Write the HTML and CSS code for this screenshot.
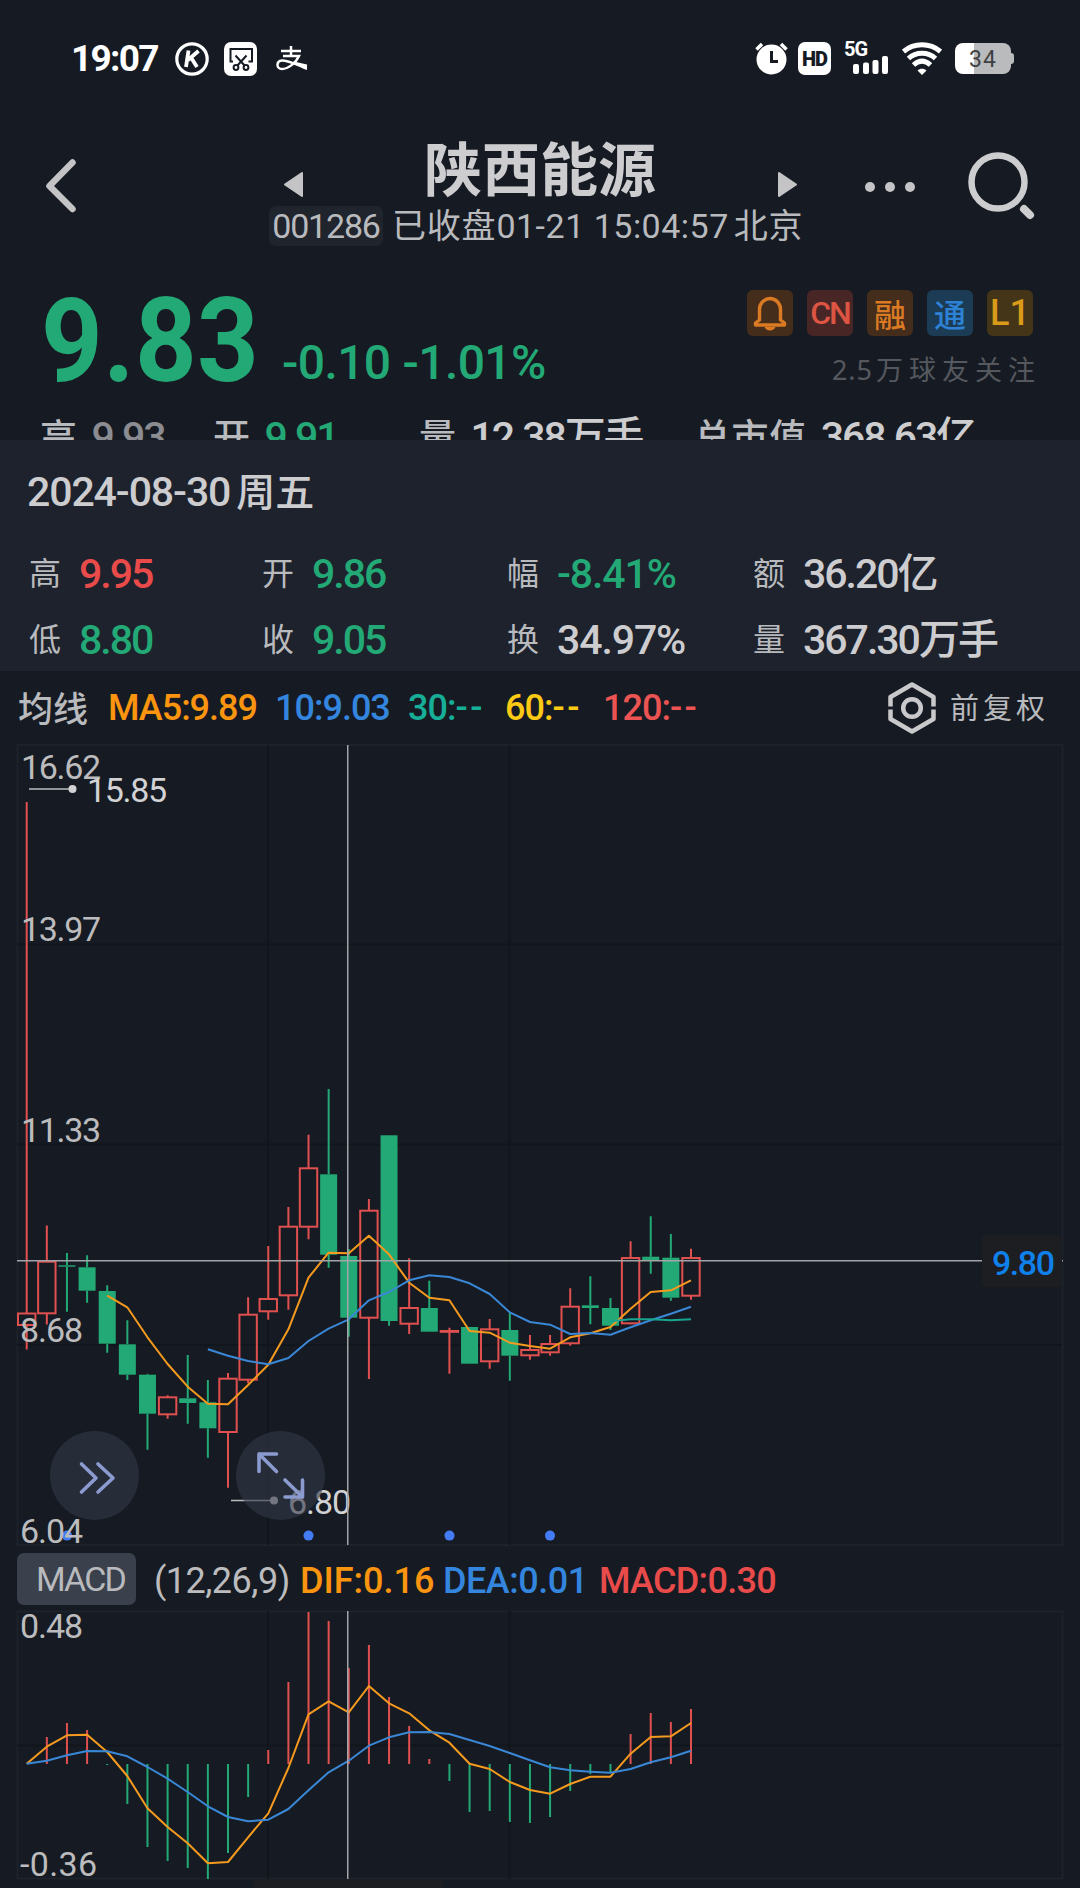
FILE: index.html
```html
<!DOCTYPE html>
<html lang="zh-CN">
<head>
    <meta charset="UTF-8">
    <meta name="viewport" content="width=device-width, initial-scale=1.0">
    <title>陕西能源 001286</title>
    <link rel="stylesheet" href="styles.css">
</head>
<body>
    <div class="status-bar">
        <span class="time">19:07</span>
        <svg class="icon-k" width="34" height="34" viewBox="0 0 34 34">
            <circle cx="17" cy="17" r="15.2" fill="none" stroke="#fff" stroke-width="3.2"/>
            <path d="M13.5 8.5 L11 25 M23.5 9 L13 18 M16 15.5 L22 25" fill="none" stroke="#fff" stroke-width="3.8"/>
        </svg>
        <svg class="icon-cut" width="33" height="34" viewBox="0 0 33 34">
            <rect width="33" height="34" rx="7" fill="#fff"/>
            <g fill="none" stroke="#161b23" stroke-width="2">
                <path d="M9 19.5 H6.5 V7 H28 V19.5 H24.5"/>
                <path d="M11.5 13.5 L21 24 M22.5 13.5 L13 24"/>
                <circle cx="12" cy="25.5" r="2.4"/>
                <circle cx="22" cy="25.5" r="2.4"/>
            </g>
        </svg>
        <svg class="icon-pay" width="32" height="25" viewBox="0 0 32 25">
            <path d="M5 5 H25 M15 0 V10 M7 10 H23 C20 17 12 23 6 23 C0 23 0 15 6 14.5 C13 14 20 20 31 21" fill="none" stroke="#fff" stroke-width="2.5"/>
            <path d="M20 16 L31 18.5 V24 C27 23 23 20 18 18 Z" fill="#fff"/>
        </svg>
        <div class="status-right">
            <svg width="33" height="33" viewBox="0 0 33 33">
                <circle cx="16.5" cy="17.5" r="15" fill="#fff"/>
                <path d="M1.5 7.5 L7 2 M31.5 7.5 L26 2" stroke="#fff" stroke-width="3.5"/>
                <path d="M16.5 9 V19.5 H23" fill="none" stroke="#161b23" stroke-width="3"/>
            </svg>
            <span class="hd">HD</span>
            <div class="signal">
                <span>5G</span>
                <svg width="36" height="18" viewBox="0 0 36 18">
                    <g fill="#fff">
                        <rect x="0" y="8" width="6" height="10" rx="2"/>
                        <rect x="10" y="6.5" width="6" height="11.5" rx="2"/>
                        <rect x="19.5" y="4" width="6" height="14" rx="2"/>
                        <rect x="29" y="0" width="6" height="18" rx="2"/>
                    </g>
                </svg>
            </div>
            <svg class="wifi" width="40" height="33" viewBox="0 0 40 33">
                <g fill="none" stroke="#fff" stroke-width="5">
                    <path d="M1.5 9.5 C12 0.500 28 0.500 38.5 9.5"/>
                    <path d="M6.500 16.500 C14 9.500 26 9.500 33.500 16.500"/>
                    <path d="M11.500 23 C17 18 23 18 28.500 23"/>
                </g>
                <path d="M15.5 28.500 C18 26 22 26 24.5 28.500 L20 33 Z" fill="#fff"/>
            </svg>
            <div class="battery"><span>34</span></div>
        </div>
    </div>

    <div class="nav">
        <svg class="back" width="30" height="54" viewBox="0 0 30 54">
            <path d="M26.5 3.5 L3.5 27 L26.5 50" fill="none" stroke="#c4c4c6" stroke-width="6.5" stroke-linecap="round" stroke-linejoin="round"/>
        </svg>
        <div class="stock">
            <div class="stock-title">
                <svg width="19" height="25" viewBox="0 0 19 25"><path d="M1 12.5 L18 1 V24 Z" fill="#c4c4c6" stroke="#c4c4c6" stroke-linejoin="round" stroke-width="2"/></svg>
                <h1>陕西能源</h1>
                <svg width="19" height="25" viewBox="0 0 19 25"><path d="M18 12.5 L1 1 V24 Z" fill="#c4c4c6" stroke="#c4c4c6" stroke-linejoin="round" stroke-width="2"/></svg>
            </div>
            <div class="stock-sub">
                <span class="code">001286</span>
                <span class="state">已收盘<em>01-21 15:04:57</em>北京</span>
            </div>
        </div>
        <svg class="more" width="50" height="12" viewBox="0 0 50 12">
            <g fill="#c4c4c6">
                <circle cx="5" cy="6" r="5"/><circle cx="25" cy="6" r="5"/><circle cx="45" cy="6" r="5"/>
            </g>
        </svg>
        <svg class="search" width="68" height="68" viewBox="0 0 68 68">
            <circle cx="30" cy="30" r="26.5" fill="none" stroke="#cdcdcf" stroke-width="6.5"/>
            <path d="M56 57 L62 63" stroke="#cdcdcf" stroke-width="8" stroke-linecap="round"/>
        </svg>
    </div>

    <div class="quote">
        <div class="quote-top">
            <div class="price"><b>9.83</b></div>
            <div class="change"><span>-0.10</span><span>-1.01%</span></div>
            <div class="quote-side">
                <div class="tags">
                    <span class="tag tag-bell">
                        <svg width="36" height="36" viewBox="0 0 36 36">
                            <path d="M7.5 25 V14.5 A10.5 11 0 0 1 28.5 14.5 V25 L32.5 28 V30 H3.5 V28 Z" fill="none" stroke="#da7b23" stroke-width="3.4" stroke-linejoin="round"/>
                            <path d="M12.5 32 H23.5 C22 36.5 14 36.5 12.5 32 Z" fill="#da7b23"/>
                        </svg>
                    </span>
                    <span class="tag tag-cn">CN</span>
                    <span class="tag tag-rong">融</span>
                    <span class="tag tag-tong">通</span>
                    <span class="tag tag-l1">L1</span>
                </div>
                <div class="followers"><span>2.5</span>万球友关注</div>
            </div>
        </div>
        <div class="summary">
            <div><label>高</label><span class="flat">9.93</span></div>
            <div><label>开</label><span class="down">9.91</span></div>
            <div><label>量</label><span>12.38万手</span></div>
            <div><label>总市值</label><span>368.63亿</span></div>
        </div>
    </div>

    <div class="day-panel">
        <div class="day">2024-08-30<span>周五</span></div>
        <div class="day-grid">
            <div><label>高</label><span class="up">9.95</span></div>
            <div><label>开</label><span class="down">9.86</span></div>
            <div><label>幅</label><span class="down percent">-8.41%</span></div>
            <div><label>额</label><span>36.20亿</span></div>
            <div><label>低</label><span class="down">8.80</span></div>
            <div><label>收</label><span class="down">9.05</span></div>
            <div><label>换</label><span class="percent">34.97%</span></div>
            <div><label>量</label><span>367.30万手</span></div>
        </div>
    </div>

    <div class="ma-bar">
        <span class="ma-name">均线</span>
        <span class="ma5">MA5:9.89</span>
        <span class="ma10">10:9.03</span>
        <span class="ma30">30:<i>--</i></span>
        <span class="ma60">60:<i>--</i></span>
        <span class="ma120">120:<i>--</i></span>
        <div class="adjust">
            <svg width="48" height="52" viewBox="0 0 48 52">
                <g fill="none" stroke="#c9c9cb" stroke-width="4.5" stroke-linejoin="round">
                    <path d="M2.5 24.5 V15 L24 2.5 L45.5 15 V24.5"/>
                    <path d="M2.5 27.5 V37 L24 49.5 L45.5 37 V27.5"/>
                    <circle cx="24" cy="26" r="8.8"/>
                </g>
            </svg>
            <span>前复权</span>
        </div>
    </div>

    <svg class="chart" width="1080" height="802" viewBox="0 744 1080 802">
        <rect class="frame" x="17.5" y="745" width="1045" height="800"/>
        <path class="grid" d="M17 944.5 H1062 M17 1144.5 H1062 M17 1345 H1062 M268 745 V1545 M509.500 745 V1545"/>
        <g id="candles"></g>
        <g class="dots">
            <circle cx="67" cy="1535.6" r="5"/>
            <circle cx="308.5" cy="1535.6" r="5"/>
            <circle cx="449.5" cy="1535.6" r="5"/>
            <circle cx="550" cy="1535.6" r="5"/>
        </g>
        <g class="axis">
            <text x="21" y="779" textLength="80">16.62</text>
            <text x="21" y="941" textLength="80">13.97</text>
            <text x="21" y="1141.5" textLength="80">11.33</text>
            <text x="20" y="1342" textLength="63">8.68</text>
            <text x="20" y="1543" textLength="63">6.04</text>
        </g>
        <g class="mark">
            <path d="M29 789 H72 M231 1500.5 H274"/>
            <circle cx="72.5" cy="789" r="4"/>
            <circle cx="274" cy="1500.5" r="4"/>
            <text x="87" y="802" textLength="80">15.85</text>
            <text x="288" y="1514" textLength="63">6.80</text>
        </g>
        <g id="maLines"></g>
        <path class="cross" d="M347.75 745 V1545 M17 1260.7 H1063"/>
        <g class="price-tag">
            <rect x="982" y="1235" width="80" height="52" rx="4"/>
            <text x="992" y="1274.500" textLength="63">9.80</text>
        </g>
        <g class="round-btn">
            <circle cx="94.5" cy="1475.5" r="44.5"/>
            <circle cx="280.5" cy="1475.5" r="44.5"/>
            <path d="M81.5 1464 L96 1478 L81.5 1492 M98 1464 L113 1478 L98 1492"/>
            <path d="M276.5 1471.5 L259 1454 M259 1471.5 V1454 H276.5 M285 1480 L302.5 1497 M302.5 1480 V1497 H285"/>
        </g>
    </svg>

    <div class="macd-bar">
        <button>MACD</button>
        <span class="params">(12,26,9)</span>
        <span class="dif">DIF:0.16</span>
        <span class="dea">DEA:0.01</span>
        <span class="macd">MACD:0.30</span>
    </div>

    <svg class="chart" width="1080" height="278" viewBox="0 1610 1080 278">
        <rect class="frame" x="17.5" y="1611.5" width="1045" height="267"/>
        <path class="grid" d="M17 1745.5 H1062 M268 1611 V1879 M509.5 1611 V1879"/>
        <g id="macdBars"></g>
        <g class="axis">
            <text x="20" y="1638" textLength="63">0.48</text>
            <text x="20" y="1876" textLength="77">-0.36</text>
        </g>
        <g id="macdLines"></g>
        <path class="cross" d="M347.75 1611 V1879"/>
        <rect class="date-tag" x="254" y="1879" width="188" height="20" rx="4"/>
    </svg>

    <script src="chart.js"></script>
</body>
</html>
```

FILE: styles.css
```css
:root {
    --bg: #161b23;
    --panel: #1d222d;
    --text: #cdcdcf;
    --muted: #b9babd;
    --up: #e94b4a;
    --down: #23a975;
    --orange: #fb940f;
    --blue: #3485dd;
}

* {
    box-sizing: border-box;
}

body {
    margin: 0;
    width: 1080px;
    height: 1888px;
    overflow: hidden;
    background: var(--bg);
    color: var(--text);
    font-family: Roboto, "Noto Sans CJK SC", sans-serif;
    font-weight: 500;
}

svg {
    display: block;
    flex-shrink: 0;
}

i,
em {
    font-style: normal;
}

.up {
    color: var(--up);
}

.down {
    color: var(--down);
}

.flat {
    color: #8b8c91;
}

/* 状态栏 */
.status-bar {
    display: flex;
    align-items: center;
    height: 112px;
    padding: 5px 66px 0 71px;
    color: #fff;
}

.time {
    width: 104px;
    font-size: 37px;
    font-weight: 700;
    letter-spacing: -1.7px;
}

.icon-cut {
    margin-left: 15px;
}

.icon-pay {
    margin-left: 19px;
}

.status-right {
    display: flex;
    align-items: center;
    margin-left: auto;
}

.hd {
    width: 33px;
    height: 33px;
    margin-left: 10px;
    border-radius: 7px;
    background: #fff;
    color: var(--bg);
    font-size: 20px;
    font-weight: 900;
    line-height: 34px;
    text-align: center;
    letter-spacing: -1px;
}

.signal {
    width: 45px;
    height: 32px;
    margin-left: 13px;
}

.signal span {
    display: block;
    height: 13px;
    font-size: 20px;
    font-weight: 700;
    line-height: 13px;
    letter-spacing: -1px;
}

.signal svg {
    margin-left: 9px;
}

.wifi {
    margin-left: 13px;
}

.battery {
    position: relative;
    width: 56px;
    height: 31px;
    margin: 0 3px 0 13px;
    border-radius: 8px;
    background: linear-gradient(90deg, #fff 19px, #b9bbbd 19px);
    color: #3f4145;
    font-size: 23px;
    font-weight: 400;
    line-height: 33px;
    text-align: center;
    letter-spacing: 1px;
}

.battery::after {
    content: "";
    position: absolute;
    top: 10px;
    right: -3px;
    width: 4px;
    height: 11px;
    border-radius: 0 3px 3px 0;
    background: #b9bbbd;
}

/* 导航 */
.nav {
    display: flex;
    align-items: flex-start;
    height: 158px;
    padding-left: 46px;
}

.back {
    margin-top: 47px;
}

.stock {
    width: 541px;
    margin-left: 193px;
    padding-top: 29px;
}

.stock-title {
    display: flex;
    align-items: center;
    justify-content: space-between;
    height: 65px;
    padding: 0 13px 0 15px;
}

.stock-title svg {
    margin-top: 22px;
}

.stock-title h1 {
    margin: -4px 0 0 -1px;
    font-size: 58px;
    font-weight: 700;
    line-height: 65px;
}

.stock-sub {
    display: flex;
    align-items: center;
    color: var(--muted);
    font-size: 34px;
    line-height: 40px;
    white-space: nowrap;
}

.code {
    width: 114px;
    border-radius: 7px;
    background: #20242d;
    text-align: center;
    letter-spacing: -1.2px;
    font-weight: 400;
}

.state {
    margin-left: 9px;
    font-weight: 400;
    letter-spacing: 0.8px;
}

.state em {
    margin-right: 5px;
    letter-spacing: 0.5px;
}

.more {
    margin: 69px 0 0 55px;
}

.search {
    margin: 40px 0 0 53px;
}

/* 报价 */
.quote {
    height: 170px;
    overflow: hidden;
}

.quote-top {
    display: flex;
    height: 145px;
    padding: 0 47px 0 41px;
    color: var(--down);
}

.price {
    width: 241px;
    font-size: 117px;
    line-height: 142px;
}

.price b {
    display: inline-block;
    transform: scaleX(0.92);
    transform-origin: left;
    letter-spacing: 0.5px;
}

.change {
    display: flex;
    gap: 12px;
    padding-top: 64px;
    font-size: 48px;
    line-height: 58px;
    letter-spacing: -0.6px;
}

.quote-side {
    margin-left: auto;
    padding-top: 20px;
}

.tags {
    display: flex;
    gap: 14px;
    justify-content: flex-end;
}

.tag {
    display: flex;
    align-items: center;
    justify-content: center;
    width: 46px;
    height: 46px;
    border-radius: 6px;
    font-size: 32px;
}

.tag-bell,
.tag-rong {
    background: #452d1c;
    color: #da7b23;
}

.tag-cn {
    background: #472625;
    color: #dc5442;
    letter-spacing: -2px;
}

.tag-tong {
    background: #1b3c54;
    color: #2d82d6;
}

.tag-l1 {
    background: #443519;
    color: #d99b18;
    font-size: 36px;
}

.followers {
    margin-top: 15px;
    color: #55585e;
    font-size: 27px;
    font-weight: 400;
    line-height: 38px;
    text-align: right;
    letter-spacing: 6px;
    margin-right: -8px;
}

.followers span {
    font-family: "Noto Sans", sans-serif;
    letter-spacing: 1px;
    margin-right: 3px;
}

.summary {
    display: grid;
    grid-template-columns: 173px 206px 275px 1fr;
    padding-left: 40px;
    font-size: 41px;
    line-height: 44px;
    letter-spacing: -2.1px;
    white-space: nowrap;
}

.summary label {
    display: inline-block;
    margin-right: 14px;
    color: var(--muted);
    font-size: 37px;
    letter-spacing: 0.6px;
}

/* 选中日行情 */
.day-panel {
    height: 231px;
    padding: 28px 0 0 27px;
    background: var(--panel);
}

.day {
    font-size: 41px;
    line-height: 48px;
    letter-spacing: -1.1px;
}

.day span {
    margin-left: 6px;
    font-size: 39px;
    letter-spacing: 0;
}

.day-grid {
    display: grid;
    grid-template-columns: 233px 245px 246px 1fr;
    grid-auto-rows: 66px;
    margin-top: 24px;
    font-size: 41px;
    line-height: 66px;
    letter-spacing: -2px;
    white-space: nowrap;
}

.day-grid > div {
    display: flex;
}

.day-grid label {
    width: 52px;
    padding-left: 2px;
    color: var(--muted);
    font-size: 32px;
    font-weight: 400;
}

.day-grid .percent {
    letter-spacing: -1.1px;
}

/* 均线 */
.ma-bar {
    display: flex;
    align-items: center;
    height: 73px;
    padding: 1px 0 0 18px;
    font-size: 36px;
    letter-spacing: -1px;
}

.ma-bar > span {
    flex-shrink: 0;
    white-space: nowrap;
}

.ma-bar i {
    letter-spacing: 2.5px;
}

.ma-name {
    width: 90px;
    margin-top: -4px;
    color: var(--muted);
    font-size: 35px;
    letter-spacing: 0;
}

.ma5 {
    width: 167px;
    color: var(--orange);
}

.ma10 {
    width: 133px;
    color: var(--blue);
}

.ma30 {
    width: 97px;
    color: #17ae98;
}

.ma60 {
    width: 98px;
    color: #fcc914;
}

.ma120 {
    color: #ec5453;
}

.adjust {
    display: flex;
    align-items: center;
    margin-left: auto;
    padding-right: 31px;
    gap: 14px;
    color: var(--muted);
    font-size: 29px;
    font-weight: 400;
    letter-spacing: 4px;
}

.adjust span {
    margin-top: -4px;
}

/* 图表 */
.chart text {
    font-size: 34px;
    font-weight: 400;
}

.frame {
    fill: none;
    stroke: #1d222b;
    stroke-width: 2;
}

.grid {
    fill: none;
    stroke: #11151c;
    stroke-width: 2;
}

.axis text {
    fill: #bcbcbe;
}

.mark text,
.mark circle {
    fill: #d2d2d4;
}

.mark path {
    stroke: #bcbcbe;
    stroke-width: 1.5;
}

.dots circle {
    fill: #437cf5;
}

.cross {
    fill: none;
    stroke: #a2a4a8;
    stroke-width: 1.5;
}

.price-tag rect,
.date-tag {
    fill: #1d1e21;
}

.price-tag text {
    fill: #1080ea;
    font-weight: 500;
}

.round-btn circle {
    fill: #343948;
    fill-opacity: 0.6;
}

.round-btn path {
    fill: none;
    stroke: #8b9bd0;
    stroke-width: 3.6;
    stroke-linecap: round;
    stroke-linejoin: round;
}

.line {
    fill: none;
    stroke-width: 2;
    stroke-linejoin: round;
}

/* MACD */
.macd-bar {
    display: flex;
    align-items: center;
    height: 64px;
    padding: 5px 0 0 17px;
    font-size: 36px;
    letter-spacing: -0.5px;
    white-space: nowrap;
}

.macd-bar button {
    width: 119px;
    height: 52px;
    margin-top: -3px;
    padding: 0 0 0 8px;
    border: none;
    border-radius: 7px;
    background: #3a414d;
    color: var(--muted);
    font: 400 34px Roboto, sans-serif;
    letter-spacing: -1.8px;
}

.macd-bar span {
    flex-shrink: 0;
}

.params {
    width: 146px;
    margin-left: 18px;
    color: #bcbcbe;
    font-weight: 400;
}

.dif {
    width: 143px;
    color: var(--orange);
    letter-spacing: 0;
}

.dea {
    width: 156px;
    color: var(--blue);
}

.macd {
    color: var(--up);
    letter-spacing: -0.7px;
}
```

FILE: chart.js
```javascript
const START_X = 26.7;
const STEP = 20.13;
const RED = '#e0504f';
const GREEN = '#23a975';

// [颜色, 最高, 实体上沿, 实体下沿, 最低]
const candles = [
    ['r', 802, 1313.5, 1325, 1349.5],
    ['r', 1225.5, 1261.7, 1313.3, 1324.5],
    ['g', 1253, 1265.3, 1266.7, 1311.7],
    ['g', 1255.3, 1267.3, 1290.7, 1302.7],
    ['g', 1285.3, 1291, 1343.7, 1352.7],
    ['g', 1320.3, 1344.3, 1374.7, 1380],
    ['g', 1373.7, 1374.7, 1413.7, 1449.7],
    ['r', 1395.3, 1397.3, 1414.3, 1418.7],
    ['g', 1355, 1398.3, 1403, 1423.7],
    ['g', 1380, 1402.3, 1428.3, 1457.7],
    ['r', 1373, 1378.7, 1432, 1487.7],
    ['r', 1297.3, 1314.7, 1379.7, 1383.3],
    ['r', 1246, 1299, 1311.3, 1319.7],
    ['r', 1207, 1226.7, 1295.3, 1309.7],
    ['r', 1134.7, 1168.3, 1226.7, 1239.3],
    ['g', 1089, 1174.3, 1254.7, 1267.7],
    ['g', 1249, 1256, 1317.7, 1336.7],
    ['r', 1199, 1210.7, 1317.7, 1379],
    ['g', 1135, 1135.3, 1321, 1325.7],
    ['r', 1258.3, 1308, 1323.7, 1334],
    ['g', 1280.7, 1308, 1331.7, 1331.7],
    ['r', 1327.7, 1331, 1331.8, 1373.7],
    ['g', 1327, 1327, 1363.7, 1363.7],
    ['r', 1319, 1329.3, 1361.3, 1368.7],
    ['g', 1312.7, 1330, 1355.7, 1380.7],
    ['r', 1335, 1350, 1355.3, 1359.7],
    ['r', 1335, 1344, 1352.3, 1355.7],
    ['r', 1288.3, 1306.7, 1343.3, 1345.7],
    ['g', 1276.3, 1305.3, 1308, 1324.3],
    ['g', 1298, 1308, 1325.7, 1330],
    ['r', 1241.3, 1258, 1323.3, 1324.3],
    ['g', 1216.3, 1256.7, 1260.7, 1273.7],
    ['g', 1234, 1257.7, 1297.7, 1300.7],
    ['r', 1248.7, 1258, 1295.7, 1299.7]
];

const ma5 = [1295.7, 1307.3, 1337.3, 1364, 1386.7, 1403.7, 1404.3, 1385, 1364.7, 1329.3, 1277.7, 1252.7, 1253.3,
    1235.7, 1254.3, 1282.7, 1297.7, 1300.3, 1331, 1332.7, 1342.7, 1346, 1348.7, 1337.3, 1333.3, 1327, 1308.7, 1292, 1290.3, 1280.3];
const ma10 = [1349.3, 1355.7, 1361, 1364.3, 1358, 1341, 1328.7, 1319.3, 1300.3, 1292, 1280.3, 1275.3, 1277, 1283.3,
    1294, 1312.3, 1322, 1324.7, 1334, 1333, 1334.7, 1327.3, 1320.3, 1313.7, 1306.7];
const ma30 = [1321.3, 1319.3, 1319.3, 1320.3, 1319.3];

const ZERO_Y = 1764;
const macdBars = [0, 27, 41, 34, -1, -40, -83, -97, -104, -115, -89, -33, 14, 82, 152, 143, 96, 119, 67, 38, 5,
    -17, -48, -47, -58, -59, -53, -27, -10, -8, 30, 51, 42, 55];
const dif = [1763.7, 1746.7, 1735.3, 1734.7, 1752, 1776, 1808.3, 1827, 1843.3, 1863.3, 1862, 1837.3, 1813.3, 1768,
    1714.3, 1701.3, 1712.3, 1686, 1703.3, 1713.3, 1730.3, 1742.7, 1763.7, 1769, 1782, 1790, 1793.7, 1784, 1776.7,
    1776.7, 1753.7, 1737, 1736.3, 1723];
const dea = [1763.7, 1760.7, 1755.3, 1751, 1751.3, 1756.3, 1767, 1778.7, 1792, 1806.3, 1817, 1821.3, 1819.7, 1809,
    1790.3, 1772.3, 1760.7, 1745.7, 1737.3, 1732.3, 1732, 1734, 1740, 1746, 1753, 1760.3, 1767.3, 1770.3, 1771.7,
    1772.7, 1769, 1762.3, 1757.3, 1750.7];

function add(parent, tag, attrs) {
    const el = document.createElementNS('http://www.w3.org/2000/svg', tag);
    for (const key in attrs) {
        el.setAttribute(key, attrs[key]);
    }
    parent.appendChild(el);
}

function x(i) {
    return START_X + STEP * i;
}

function drawLine(parent, values, from, color) {
    const points = values.map((v, i) => x(from + i).toFixed(1) + ',' + v).join(' ');
    add(parent, 'polyline', { class: 'line', points: points, stroke: color });
}

// K线
const candleGroup = document.getElementById('candles');
candles.forEach(([type, high, top, bottom, low], i) => {
    const cx = x(i);
    const color = type === 'r' ? RED : GREEN;
    add(candleGroup, 'path', {
        d: `M${cx} ${high} V${top} M${cx} ${bottom} V${low}`,
        stroke: color,
        'stroke-width': 2
    });
    if (type === 'r') {
        add(candleGroup, 'rect', { x: cx - 8.7, y: top, width: 17.4, height: bottom - top, fill: 'none', stroke: color, 'stroke-width': 2 });
    } else {
        add(candleGroup, 'rect', { x: cx - 8.5, y: top, width: 17, height: bottom - top, fill: color });
    }
});

// 均线
const maGroup = document.getElementById('maLines');
drawLine(maGroup, ma5, 4, '#f59a1f');
drawLine(maGroup, ma10, 9, '#3a87d6');
drawLine(maGroup, ma30, 29, '#17a590');

// MACD柱
const barGroup = document.getElementById('macdBars');
macdBars.forEach((v, i) => {
    add(barGroup, 'path', {
        d: `M${x(i)} ${ZERO_Y} V${ZERO_Y - v}`,
        stroke: v > 0 ? RED : GREEN,
        'stroke-width': 2
    });
});

const macdGroup = document.getElementById('macdLines');
drawLine(macdGroup, dif, 0, '#f59a1f');
drawLine(macdGroup, dea, 0, '#3a87d6');
```
